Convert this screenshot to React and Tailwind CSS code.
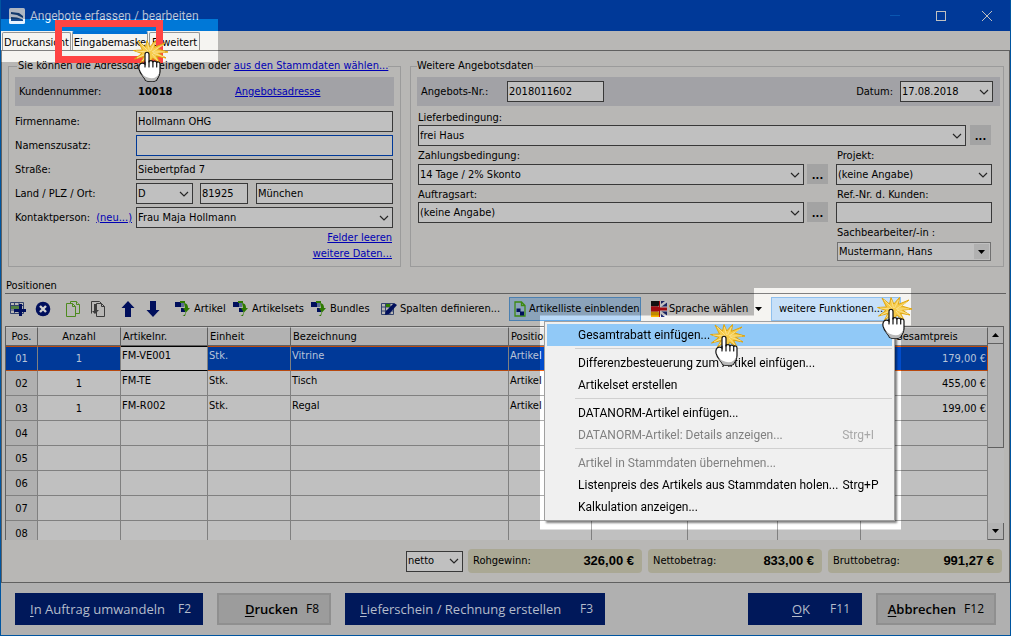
import React from "react";

const chevron = (
  <svg className="pointer-events-none absolute right-1 top-1/2 h-2 w-[10px] -translate-y-1/2" viewBox="0 0 10 8" fill="none" stroke="#262626" strokeWidth="1.2">
    <path d="M1 2l4 4 4-4" />
  </svg>
);

function Field({ id, value, className = "", label }) {
  return (
    <input
      id={id}
      aria-label={label}
      defaultValue={value}
      className={`h-[21px] min-w-0 border bg-[#c0c0c0] px-px outline-none ${className}`}
    />
  );
}

function Combo({ id, value, className = "", label }) {
  return (
    <span className={`relative block h-[21px] min-w-0 ${className}`}>
      <select id={id} aria-label={label} className="h-full w-full appearance-none border border-[#383838] bg-[#c0c0c0] px-px outline-none">
        <option>{value}</option>
      </select>
      {chevron}
    </span>
  );
}

function More({ label }) {
  return (
    <button aria-label={label} className="h-[20px] w-[21px] shrink-0 bg-[#a3a3a3] pt-[3px] font-bold leading-[17px]">
      ...
    </button>
  );
}

function ClickHand({ className }) {
  return (
    <svg className={`pointer-events-none absolute z-40 h-[44px] w-[36px] ${className}`} viewBox="0 0 36 44">
      <path
        d="M5 1l7.500 6L14 .5l2.800 6.500L22.500.5l-1 6.800L32 3l-7.500 6L35 12l-9.500 1.200L33 18l-9.500-1.800L27 23l-7.500-5-2 5-2.500-5-7.500 5 3.500-6.500L1.500 19 9 13.500.5 10.500 9.500 10z"
        fill="#f6cb4a"
        stroke="#e0a50c"
        strokeWidth="1"
      />
      <path d="M7 3l8 8M14.500 3l2 8M21.500 3l-4 8M30 5l-11 7M32 12H20M3 11l12 1M4 18l11-5M9 21l6-7M25 21l-6-7M31 17l-11-4" stroke="#fbe9a8" strokeWidth=".7" fill="none" />
      <path
        d="M12 14.500c0-3 4-3 4 0v8c0-2.500 3.700-2.500 3.900 0 .2-2 3.600-2 3.800.4.300-1.500 3.200-1.200 3.300.8v8c0 4-2.500 6-3.500 8.500-2 1.500-9 1.500-11 0-1-3-5.500-6-6.500-11-.5-3 .3-5.700 3-6 1.400-.1 2.300.3 3 1z"
        fill="#fff"
        stroke="#111"
        strokeWidth="1.200"
      />
      <path d="M8 33c2 4 4 5 5 7.500 3 1 8 .8 10-.3 1-3 3.500-4 3.500-8-1.500 4-4 6-8 6s-8-2-10.500-5.200z" fill="#b9b9b9" />
      <path d="M12 22v5M16 21v6M19.900 22v5M23.700 23v4" stroke="#111" strokeWidth="1.200" strokeLinecap="round" />
    </svg>
  );
}

const PartIcon = () => (
  <svg viewBox="0 0 15 15" className="h-[15px] w-[15px] shrink-0">
    <path d="M0 1h6v5H0zM6 7h4v4H6z" fill="#000f5c" />
    <path d="M5 0h5v2H5z" fill="#2e7a00" />
    <path d="M9 2c3 .5 4 2 4 5h2l-4 4.500L10 15H7.500c2-1 3-2 3-4L8 7h2z" fill="#2e7a00" />
    <path d="M6 2h3v4H6z" fill="#5a6e94" />
  </svg>
);

const AddIcon = () => (
  <svg viewBox="0 0 16 16" className="h-4 w-4">
    <path d="M.5 1.500h13v11H.5zM.5 4.500h13M.5 9h13M4.500 1.500v11M9 1.500v11" fill="none" stroke="#33436c" />
    <path d="M1 5h8v3H1z" fill="#4f8040" />
    <path d="M9 3h3v5h4v3h-4v4H9v-4H4V8h5z" fill="#000f5c" />
  </svg>
);
const DeleteIcon = () => (
  <svg viewBox="0 0 16 16" className="h-4 w-4">
    <circle cx="8" cy="8" r="7.300" fill="#000f5c" />
    <path d="M5 5l6 6M11 5l-6 6" stroke="#d0d0d0" strokeWidth="2.400" />
  </svg>
);
const CopyIcon = () => (
  <svg viewBox="0 0 16 16" className="h-4 w-4" fill="#b8b7b5" stroke="#4d8a1e">
    <path d="M5.500.5h6l3 3v9h-9z" />
    <path d="M11.500.5v3h3M1.500 2.500h6l3 3v10h-9zM7.500 2.500v3h3" />
  </svg>
);
const PasteIcon = () => (
  <svg viewBox="0 0 16 16" className="h-4 w-4" fill="none" stroke="#3c3c3c">
    <path d="M1.500 12.500V.5h8l2 2" />
    <path d="M6.500 15.500V2.500h5l3 3v10z" fill="#b8b7b5" />
    <path d="M11.500 2.500v3h3" />
    <path d="M4 3h2v6h3l-4 4-3-3h2z" fill="#3c3c3c" stroke="none" />
  </svg>
);
const ArrowIcon = ({ down }) => (
  <svg viewBox="0 0 14 16" className={`h-4 w-[14px] ${down ? "rotate-180" : ""}`}>
    <path d="M7 0l6.500 7H10v9H4V7H.5z" fill="#000f5c" />
  </svg>
);
const ColumnsIcon = () => (
  <svg viewBox="0 0 16 14" className="h-[14px] w-4 shrink-0">
    <path d="M.5 1.500h12v11H.5zM.5 5h12M.5 9h12M4.500 1.500v11M9 1.500v11" fill="none" stroke="#33436c" />
    <path d="M5 2h4v3H5z" fill="#2e7a00" />
    <path d="M13 1l3 2-8 9-4 1 1-4z" fill="#000f5c" />
  </svg>
);
const ListIcon = () => (
  <svg viewBox="0 0 12 16" className="h-4 w-3 shrink-0">
    <path d="M1 1h6.500L11 4.500V15H1zM7.500 1v3.500H11" fill="none" stroke="#3d8a10" strokeWidth="1.300" />
    <path d="M2.500 7.500h4v3h3.500v4H6v-3.500H2.500z" fill="#000f5c" />
  </svg>
);
const FlagIcon = () => (
  <svg viewBox="0 0 16 16" className="h-4 w-4 shrink-0">
    <path d="M0 0h8v5.300H0z" fill="#101010" />
    <path d="M0 5.300h8v5.400H0z" fill="#a00a10" />
    <path d="M0 10.700h8V16H0z" fill="#c08a00" />
    <path d="M8 0h8v16H8z" fill="#1a2460" />
    <path d="M8 6l8-6M8 10l8 6" stroke="#c0c0c0" strokeWidth="2.400" />
    <path d="M8 5.500h8v5H8zM8 0h2v16H8z" fill="#c0c0c0" />
    <path d="M8 6.500h8v3H8zM8 0h1v16H8z" fill="#a00a10" />
  </svg>
);

const rows = [
  ["01", "1", "FM-VE001", "Stk.", "Vitrine", "Artikel", "", "", "", "179,00 €"],
  ["02", "1", "FM-TE", "Stk.", "Tisch", "Artikel", "", "", "", "455,00 €"],
  ["03", "1", "FM-R002", "Stk.", "Regal", "Artikel", "", "", "", "199,00 €"],
  ["04"], ["05"], ["06"], ["07"], ["08"],
];
const heads = ["Pos.", "Anzahl", "Artikelnr.", "Einheit", "Bezeichnung", "Positionsart", "", "", "", "Gesamtpreis"];

function cellClass(col, selected) {
  const base = "h-[25px] overflow-hidden whitespace-nowrap border-b border-r ";
  const align =
    col < 2 ? "px-0 pb-0 text-center align-middle " : col === 9 ? "pb-0 pl-0 pr-px text-right align-middle " : "pb-0 pl-px pr-0 align-top leading-[18px] ";
  const top = selected ? "pt-0 " : col < 2 || col === 9 ? "pt-[2px] " : "pt-px ";
  if (!selected) return base + align + top + "border-[#808080] " + (col === 0 ? "bg-[#b0b0b0]" : "bg-[#c0c0c0]");
  if (col === 2) return base + align + top + "border-t border-t-black border-b-black border-r-[#808080] bg-[#c0c0c0]";
  return base + align + top + "border-t border-t-[#b84a10] border-b-[#b84a10] bg-[#003998] text-[#b8c4d8] " + (col === 9 ? "border-r-[#b84a10]" : "border-r-[#808080]");
}

function MenuItem({ children, shortcut, active, disabled }) {
  return (
    <button
      disabled={disabled}
      className={`flex h-[22px] w-full items-center justify-between gap-1 whitespace-nowrap pl-[31px] pr-[18px] text-left ${active ? "bg-[#91c9f7]" : ""} ${disabled ? "text-[#808080]" : "text-black"}`}
    >
      <span>{children}</span>
      {shortcut && <span className={`w-[37px] text-right ${disabled ? "text-[#a8a8a8]" : ""}`}>{shortcut}</span>}
    </button>
  );
}
const MenuLine = () => <div className="my-[2px] ml-[28px] h-[2px] border-t border-[#d0d0d0]" />;

function Sum({ label, value }) {
  return (
    <div className="flex h-6 w-[174px] items-center justify-between rounded bg-[#aaa894] pl-[5px] pr-2">
      <span>{label}</span>
      <span className="font-['Liberation_Sans',sans-serif] text-[13px] font-bold">{value}</span>
    </div>
  );
}

function Action({ hot, rest, keyName, primary, className }) {
  return (
    <button
      className={`flex h-8 items-center whitespace-nowrap font-['Open_Sans',sans-serif] text-[13px] ${primary ? "bg-[#00185a] text-[#b4bccb]" : "border-2 border-[#8f8f8f] bg-[#9c9c9c] text-black"} ${className}`}
    >
      <span className={primary ? "font-medium" : "font-semibold"}><u className="underline-offset-2">{hot}</u>{rest}</span>
      <span className="text-[12px]">{keyName}</span>
    </button>
  );
}

const link = "text-[#0000b4] underline";

export default function App() {
  return (
    <div className="flex min-h-screen flex-col border-x border-b border-[#0055a0] bg-[#b0b0b0] font-['DejaVu_Sans_Condensed','DejaVu_Sans',sans-serif] text-[11px] leading-[14px] text-black">
      <header className="relative flex h-[31px] shrink-0 items-center bg-[#003998] pl-2">
        <div className="absolute bottom-0 left-0 h-3 w-[217px] bg-[#005aa1]" />
        <svg viewBox="0 0 16 16" className="relative h-4 w-4">
          <rect width="16" height="16" rx="1.500" fill="#aeb6c2" />
          <path d="M2 4l8 1 4 3v2L8 7 2 6zM2 9l6 .5 6 2V13H2z" fill="#10386c" />
        </svg>
        <h1 className="relative ml-[5px] pt-px font-['Roboto',sans-serif] text-[12px] text-[#b4bfd2]">Angebote erfassen / bearbeiten</h1>
        <div className="ml-auto mr-[18px] flex items-center gap-[36px]">
          <button aria-label="Minimieren" className="h-px w-[10px] bg-[#0a56b0]" />
          <button aria-label="Maximieren" className="h-[10px] w-[10px] border border-[#c0c0c0]" />
          <button aria-label="Schließen">
            <svg viewBox="0 0 10 10" className="h-[10px] w-[10px]" stroke="#c0c0c0"><path d="M0 0l10 10M10 0L0 10" /></svg>
          </button>
        </div>
      </header>

      <nav className="relative flex h-[19px] shrink-0 items-end gap-px bg-[#b8b7b5] pl-px">
        <button className="h-[18px] w-[69px] whitespace-nowrap rounded-t-[2px] border border-b-0 border-[#707070] pt-[3px] text-center">Druckansicht</button>
        <button className="h-[19px] w-[76px] whitespace-nowrap rounded-t-[2px] border border-b-0 border-t-[3px] border-[#707070] border-t-[#0055a0] pt-[2px] text-center">Eingabemaske</button>
        <button className="h-[18px] w-[51px] whitespace-nowrap rounded-t-[2px] border border-b-0 border-[#707070] pt-[3px] text-center">Erweitert</button>
        <div className="pointer-events-none absolute -top-3 left-0 z-20 h-[44px] w-[218px] backdrop-brightness-[1.333]" />
        <div className="pointer-events-none absolute -top-[11px] left-[54px] z-30 h-[43px] w-[108px] border-[7px] border-[#ff4444]" />
        <ClickHand className="left-[132px] top-[9px]" />
      </nav>

      <main className="flex flex-1 flex-col border border-[#606060] bg-[#b8b7b5]">
        <div className="flex items-stretch gap-[9px] pl-[6px] pr-[5px] pt-[8px]">
          <fieldset className="h-[208px] w-[393px] min-w-0 shrink-0 border border-[#9b9b9b] px-[6px]">
            <legend className="ml-[2px] whitespace-nowrap pl-px">
              Sie können die Adressdaten eingeben oder <a href="#stammdaten" className={link}>aus den Stammdaten wählen...</a>
            </legend>
            <div className="mt-[4px] grid h-[29px] grid-cols-[119px_97px_1fr] items-center bg-[#a2a2a6] pl-1">
              <span>Kundennummer:</span>
              <b>10018</b>
              <span><a href="#adresse" className={link}>Angebotsadresse</a></span>
            </div>
            <div className="mt-[5px] grid grid-cols-[121px_1fr] items-center gap-y-[3px] pr-px">
              <label htmlFor="firma">Firmenname:</label>
              <Field id="firma" value="Hollmann OHG" className="border-[#383838]" />
              <label htmlFor="zusatz">Namenszusatz:</label>
              <Field id="zusatz" value="" className="border-[#003998]" />
              <label htmlFor="strasse">Straße:</label>
              <Field id="strasse" value="Siebertpfad 7" className="border-[#383838]" />
              <label htmlFor="land">Land / PLZ / Ort:</label>
              <div className="flex gap-[7px]">
                <Combo id="land" value="D" className="w-[57px] shrink-0" />
                <Field label="PLZ" value="81925" className="w-12 shrink-0 border-[#383838]" />
                <Field label="Ort" value="München" className="ml-px flex-1 border-[#383838]" />
              </div>
              <span className="flex justify-between whitespace-nowrap pr-1">
                <label htmlFor="kontakt">Kontaktperson:</label>
                <a href="#neu" className={link}>(neu...)</a>
              </span>
              <Combo id="kontakt" value="Frau Maja Hollmann" />
            </div>
            <div className="flex flex-col items-end pr-[2px] pt-[2px] leading-4">
              <a href="#leeren" className={link}>Felder leeren</a>
              <a href="#daten" className={link}>weitere Daten...</a>
            </div>
          </fieldset>

          <fieldset className="h-[208px] min-w-0 flex-1 border border-[#9b9b9b] pl-[6px] pr-[3px]">
            <legend className="pr-px">Weitere Angebotsdaten</legend>
            <div className="mt-[4px] flex h-[29px] items-center bg-[#a2a2a6] pl-1 pr-[7px]">
              <label htmlFor="nr" className="w-[86px]">Angebots-Nr.:</label>
              <Field id="nr" value="2018011602" className="w-[97px] border-[#383838]" />
              <label htmlFor="datum" className="ml-auto mr-[7px]">Datum:</label>
              <Combo id="datum" value="17.08.2018" className="w-[93px]" />
            </div>
            <div className="flex flex-col gap-[3px] pl-px pr-2 pt-[5px]">
              <div>
                <label htmlFor="liefer" className="block">Lieferbedingung:</label>
                <div className="flex gap-1 pr-px">
                  <Combo id="liefer" value="frei Haus" className="flex-1" />
                  <More label="Lieferbedingungen" />
                </div>
              </div>
              <div className="flex gap-2">
                <div className="flex min-w-0 flex-1 flex-col gap-[3px]">
                  <div>
                    <label htmlFor="zahlung" className="block">Zahlungsbedingung:</label>
                    <div className="mt-px flex gap-[3px]">
                      <Combo id="zahlung" value="14 Tage / 2% Skonto" className="flex-1" />
                      <More label="Zahlungsbedingungen" />
                    </div>
                  </div>
                  <div>
                    <label htmlFor="art" className="block">Auftragsart:</label>
                    <div className="flex gap-[3px]">
                      <Combo id="art" value="(keine Angabe)" className="flex-1" />
                      <More label="Auftragsarten" />
                    </div>
                  </div>
                </div>
                <div className="flex w-[156px] flex-col gap-[3px]">
                  <div>
                    <label htmlFor="projekt" className="block pl-px">Projekt:</label>
                    <Combo id="projekt" value="(keine Angabe)" className="mt-px" />
                  </div>
                  <div>
                    <label htmlFor="ref" className="block pl-px">Ref.-Nr. d. Kunden:</label>
                    <Field id="ref" value="" className="block w-full border-[#383838]" />
                  </div>
                  <div>
                    <label htmlFor="bearbeiter" className="block pl-px">Sachbearbeiter/-in :</label>
                    <span className="relative mx-px mt-[2px] block h-[19px]">
                      <select id="bearbeiter" className="h-full w-full appearance-none border border-[#707070] bg-[#c0c0c0] px-px outline-none">
                        <option>Mustermann, Hans</option>
                      </select>
                      <svg className="pointer-events-none absolute right-[2px] top-[2px] h-[15px] w-[15px] bg-[#b0b0b0]" viewBox="0 0 15 15"><path d="M4 6h7l-3.500 4z" /></svg>
                    </span>
                  </div>
                </div>
              </div>
            </div>
          </fieldset>
        </div>

        <h2 className="mx-[3px] mt-[12px] border-b border-[#606060] pl-px">Positionen</h2>

        <div className="flex h-[32px] shrink-0 items-center whitespace-nowrap pl-[3px] pb-[3px]">
          <button aria-label="Position hinzufügen" className="flex h-6 w-[25px] items-center justify-center"><AddIcon /></button>
          <button aria-label="Position löschen" className="flex h-6 w-[25px] items-center justify-center"><DeleteIcon /></button>
          <button aria-label="Kopieren" className="ml-[5px] flex h-6 w-[25px] items-center justify-center"><CopyIcon /></button>
          <button aria-label="Einfügen" className="flex h-6 w-[25px] items-center justify-center"><PasteIcon /></button>
          <button aria-label="Nach oben" className="ml-[5px] flex h-6 w-[25px] items-center justify-center"><ArrowIcon /></button>
          <button aria-label="Nach unten" className="flex h-6 w-[25px] items-center justify-center"><ArrowIcon down /></button>
          <button className="ml-[10px] flex h-6 w-[58px] items-center gap-1"><PartIcon />Artikel</button>
          <button className="flex h-6 w-[78px] items-center gap-1"><PartIcon />Artikelsets</button>
          <button className="flex h-6 w-[70px] items-center gap-1"><PartIcon />Bundles</button>
          <button className="flex h-6 w-[128px] items-center gap-[3px]"><ColumnsIcon />Spalten definieren...</button>
          <button className="flex h-6 w-[132px] items-center gap-[3px] border border-[#4c80b0] bg-[#8ba3ba] pl-1"><ListIcon />Artikelliste einblenden</button>
          <button className="ml-[10px] flex h-6 w-[103px] items-center gap-[2px]"><FlagIcon />Sprache wählen</button>
          <button aria-label="Sprachauswahl öffnen" className="flex h-6 w-[17px] items-center pl-px">
            <svg viewBox="0 0 7 4" className="h-1 w-[7px]"><path d="M0 0h7L3.500 4z" /></svg>
          </button>
          <div className="relative h-6 w-[130px]">
            <div className="pointer-events-none absolute -left-[231px] -top-[9px] z-10 h-[242px] w-[372px] backdrop-brightness-[1.333] [clip-path:polygon(214px_0,372px_0,372px_38px,361px_38px,361px_242px,0_242px,0_28px,214px_28px)]" />
            <button className="relative z-20 h-6 w-full border border-[#8fc0ee] bg-[#c7e0f8] pl-[7px] text-left">weitere Funktionen...</button>
            <div className="absolute right-[6px] top-6 z-20 w-[351px] border border-[#a0a0a0] bg-[#f0f0f0] p-[2px] font-['Roboto',sans-serif] text-[12px] shadow-[2px_2px_2px_rgba(0,0,0,0.5)]">
              <MenuItem active>Gesamtrabatt einfügen...</MenuItem>
              <MenuLine />
              <MenuItem>Differenzbesteuerung zum Artikel einfügen...</MenuItem>
              <MenuItem>Artikelset erstellen</MenuItem>
              <MenuLine />
              <MenuItem>DATANORM-Artikel einfügen...</MenuItem>
              <MenuItem disabled shortcut="Strg+I">DATANORM-Artikel: Details anzeigen...</MenuItem>
              <MenuLine />
              <MenuItem disabled>Artikel in Stammdaten übernehmen...</MenuItem>
              <MenuItem shortcut="Strg+P">Listenpreis des Artikels aus Stammdaten holen...</MenuItem>
              <MenuItem>Kalkulation anzeigen...</MenuItem>
            </div>
            <ClickHand className="left-[106px] top-0" />
            <ClickHand className="-left-[61px] top-[27px]" />
          </div>
        </div>

        <div className="ml-[3px] mr-[5px] flex min-h-[214px] flex-1 basis-0 border-l border-t border-[#606060]">
          <div className="relative min-w-0 flex-1">
            <div className="absolute inset-0 overflow-hidden">
              <table className="w-full table-fixed border-separate border-spacing-0">
                <colgroup>
                  <col className="w-[32px]" /><col className="w-[83px]" /><col className="w-[87px]" /><col className="w-[83px]" /><col />
                  <col className="w-[83px]" /><col className="w-[96px]" /><col className="w-[90px]" /><col className="w-[83px]" /><col className="w-[127px]" />
                </colgroup>
                <thead>
                  <tr>
                    {heads.map((h, i) => (
                      <th key={i} className={`h-[19px] overflow-hidden whitespace-nowrap border-b border-r border-t border-b-[#606060] border-r-[#606060] border-t-[#c8c8c8] bg-[#b2b2b2] py-0 pr-0 font-normal ${i < 2 ? "pl-0 text-center" : i === 9 ? "pl-[34px] text-left" : "pl-[2px] text-left"}`}>{h}</th>
                    ))}
                  </tr>
                </thead>
                <tbody>
                  {rows.map((r, ri) => (
                    <tr key={r[0]}>
                      {heads.map((_, ci) => (
                        <td key={ci} className={cellClass(ci, ri === 0)}>{r[ci] || ""}</td>
                      ))}
                    </tr>
                  ))}
                </tbody>
              </table>
            </div>
          </div>
          <div className="flex w-4 shrink-0 flex-col bg-[#bababa]">
            <button aria-label="Nach oben blättern" className="flex h-[17px] items-center justify-center border-b border-r border-[#606060] bg-[#b4b4b4]">
              <svg viewBox="0 0 7 4" className="h-1 w-[7px]"><path d="M0 4h7L3.500 0z" /></svg>
            </button>
            <div className="h-[104px] border-b border-r border-[#606060] bg-[#b4b4b4]" />
            <button aria-label="Nach unten blättern" className="mt-auto flex h-[17px] items-center justify-center border-b border-r border-[#606060] bg-[#b4b4b4]">
              <svg viewBox="0 0 7 4" className="h-1 w-[7px]"><path d="M0 0h7L3.500 4z" /></svg>
            </button>
          </div>
        </div>

        <div className="flex h-[42px] shrink-0 items-center justify-end gap-[6px] pr-[7px]">
          <Combo label="Preisart" value="netto" className="-mr-px w-[57px]" />
          <Sum label="Rohgewinn:" value="326,00 €" />
          <Sum label="Nettobetrag:" value="833,00 €" />
          <Sum label="Bruttobetrag:" value="991,27 €" />
        </div>
      </main>

      <footer className="flex shrink-0 items-center gap-[14px] pb-[10px] pl-[14px] pr-[14px] pt-[10px]">
        <Action primary hot="I" rest="n Auftrag umwandeln" keyName="F2" className="w-[188px] justify-between pl-[15px] pr-3" />
        <Action hot="D" rest="rucken" keyName="F8" className="w-[114px] justify-end gap-2 pr-[10px]" />
        <Action primary hot="L" rest="ieferschein / Rechnung erstellen" keyName="F3" className="w-[260px] justify-between pl-[15px] pr-3" />
        <Action primary hot="O" rest="K" keyName="F11" className="ml-auto w-[114px] justify-end gap-5 pr-3" />
        <Action hot="A" rest="bbrechen" keyName="F12" className="w-[120px] justify-end gap-2 pr-[10px]" />
      </footer>
    </div>
  );
}
